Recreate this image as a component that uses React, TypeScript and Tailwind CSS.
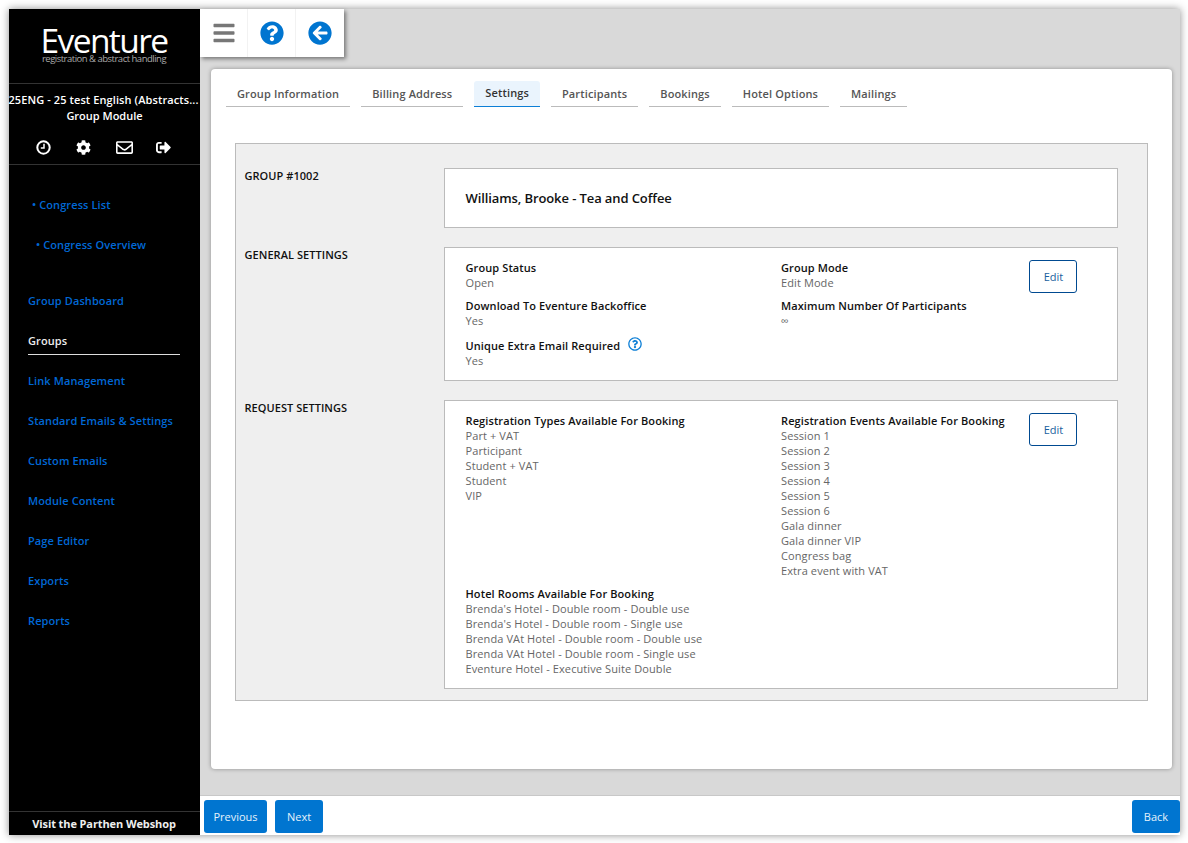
import { FaBars, FaQuestionCircle, FaArrowCircleLeft, FaCog, FaRegEnvelope, FaSignOutAlt, FaRegQuestionCircle } from "react-icons/fa";

const tabs = ["Group Information", "Billing Address", "Settings", "Participants", "Bookings", "Hotel Options", "Mailings"];
const nav = ["Group Dashboard", "Groups", "Link Management", "Standard Emails & Settings", "Custom Emails", "Module Content", "Page Editor", "Exports", "Reports"];

function Field({ title, values, icon }: { title: string; values: string[]; icon?: boolean }) {
  return (
    <div className="mb-2 last:mb-0">
      <div className="flex items-center text-[11px] leading-[15px] font-semibold text-[#111] whitespace-nowrap tracking-[0.1px]">
        {title}
        {icon && <FaRegQuestionCircle className="-mt-[3px] ml-2 text-[14px] text-[#0d7fd6]" />}
      </div>
      {values.map((v, i) => (
        <div key={i} className="text-[11px] leading-[15px] tracking-[0.1px] text-[#666] whitespace-nowrap">{v}</div>
      ))}
    </div>
  );
}

function EditButton() {
  return (
    <button className="w-[48px] h-[33px] rounded-[3px] border border-[#004a91] bg-white pt-[1px] pl-[1px] text-[11px] text-[#1a5f9e]">Edit</button>
  );
}

function Section({ label, children }: { label: string; children: React.ReactNode }) {
  return (
    <div className="flex">
      <div className="w-[199px] -ml-[0.5px] mr-[0.5px] text-[11px] leading-[15px] font-semibold tracking-[0.05px] text-[#111] whitespace-nowrap">{label}</div>
      <div className="w-[674px] border border-[#bbbbbb] bg-white">{children}</div>
    </div>
  );
}

export default function App() {
  return (
    <div className="w-[1188px] h-[843px] bg-white p-[9px] pr-[8px] overflow-hidden font-['Open_Sans',sans-serif]">
      <div className="flex h-[826px] w-[1171px] shadow-[0_0_8px_rgba(0,0,0,0.45)]">
        <aside className="flex w-[191px] shrink-0 flex-col bg-black text-white">
          <div className="flex h-[75px] flex-col items-center border-b border-[#333] pt-[18px] pr-[1px]">
            <div className="text-[33.5px] leading-[26px] font-medium tracking-[-1.6px] text-white">Eventure</div>
            <div className="text-[9.5px] leading-[11px] tracking-[-0.5px] text-[#aaa]">registration &amp; abstract handling</div>
          </div>
          <div className="flex h-[81px] flex-col border-b border-[#333] pt-[8px]">
            <div className="-ml-[2px] overflow-hidden text-center text-[11px] leading-[16px] font-semibold tracking-[0.1px] whitespace-nowrap">25ENG - 25 test English (Abstracts...</div>
            <div className="text-center text-[11px] leading-[16px] font-semibold">Group Module</div>
            <div className="mt-[15px] flex items-center pl-[27px] text-[14px]">
              <svg width="15" height="15" viewBox="0 0 15 15" fill="none" stroke="white" className="mr-[25px]">
                <circle cx="7.5" cy="7.5" r="6.2" strokeWidth="2" />
                <path d="M8 3.8V8H4.8" strokeWidth="1.5" />
              </svg>
              <FaCog className="mr-[25px] text-[15px]" />
              <FaRegEnvelope className="mr-[23px] text-[17px]" />
              <FaSignOutAlt className="text-[15px]" />
            </div>
          </div>
          <nav className="flex flex-1 flex-col text-[11px] font-semibold tracking-[0.1px] text-[#0068d6]">
            <div className="mt-[32px] h-[15px] pl-[23px] leading-[15px]">• Congress List</div>
            <div className="mt-[25px] h-[15px] pl-[27px] leading-[15px]">• Congress Overview</div>
            <div className="mt-[29px] flex flex-col">
              {nav.map((n) => (
                <div key={n} className="h-[40px] pr-[20px] pl-[19px] pt-[12px]">
                  <div className={n === "Groups" ? "border-b border-[#ddd] pb-[6px] leading-[15px] text-[#eee]" : "leading-[15px]"}>{n}</div>
                </div>
              ))}
            </div>
          </nav>
          <div className="flex h-[24px] items-center justify-center border-t border-[#333] pt-[2px] pr-[1px] text-[11px] font-bold tracking-[-0.1px] text-[#eee]">Visit the Parthen Webshop</div>
        </aside>
        <main className="flex flex-1 flex-col bg-[#d9d9d9]">
          <div className="flex h-[48px] w-[144px] shrink-0 bg-white shadow-[2px_2px_4px_rgba(0,0,0,0.45)]">
            <div className="flex w-[48px] items-center justify-center border-r border-[#f2f2f2]"><FaBars className="text-[24px] text-[#777]" /></div>
            <div className="flex w-[48px] items-center justify-center border-r border-[#f2f2f2]"><FaQuestionCircle className="text-[24px] text-[#0075d0]" /></div>
            <div className="flex w-[48px] items-center justify-center"><FaArrowCircleLeft className="text-[24px] text-[#0075d0]" /></div>
          </div>
          <div className="flex-1 pt-[12px] pr-[8px] pl-[11px]">
            <div className="h-[700px] rounded-[4px] bg-white pt-[12px] pl-[15px] shadow-[0_0_4px_rgba(0,0,0,0.35)]">
              <div className="flex gap-[11px]">
                {tabs.map((t) => (
                  <div key={t} className={t === "Settings"
                    ? "h-[26px] rounded-t-[3px] border-b border-[#0d7fd6] bg-[#eaf4fd] px-[11px] text-[11px] leading-[24px] font-semibold tracking-[0.13px] text-[#333]"
                    : "h-[26px] border-b border-[#bbb] px-[11px] pt-[1px] text-[11px] leading-[24px] font-semibold tracking-[0.13px] text-[#555]"}>{t}</div>
                ))}
              </div>
              <div className="mt-[36px] ml-[9px] flex h-[558px] w-[913px] flex-col gap-[19px] border border-[#bbb] bg-[#efefef] pt-[24px] pl-[9px]">
                <Section label="GROUP #1002">
                  <div className="flex h-[58px] items-center pt-[2px] pl-[20.5px] text-[13px] font-semibold tracking-[-0.1px] text-[#111]">Williams, Brooke - Tea and Coffee</div>
                </Section>
                <Section label="GENERAL SETTINGS">
                  <div className="grid grid-cols-[315.5px_248px_48px] py-[12px] pl-[20.5px]">
                    <div>
                      <Field title="Group Status" values={["Open"]} />
                      <Field title="Download To Eventure Backoffice" values={["Yes"]} />
                      <div className="pt-[2px]">
                        <Field title="Unique Extra Email Required" values={["Yes"]} icon />
                      </div>
                    </div>
                    <div>
                      <Field title="Group Mode" values={["Edit Mode"]} />
                      <Field title="Maximum Number Of Participants" values={["∞"]} />
                    </div>
                    <EditButton />
                  </div>
                </Section>
                <Section label="REQUEST SETTINGS">
                  <div className="py-[12px] pl-[20.5px]">
                    <div className="grid grid-cols-[315.5px_248px_48px]">
                      <Field title="Registration Types Available For Booking" values={["Part + VAT", "Participant", "Student + VAT", "Student", "VIP"]} />
                      <Field title="Registration Events Available For Booking" values={["Session 1", "Session 2", "Session 3", "Session 4", "Session 5", "Session 6", "Gala dinner", "Gala dinner VIP", "Congress bag", "Extra event with VAT"]} />
                      <EditButton />
                    </div>
                    <Field title="Hotel Rooms Available For Booking" values={["Brenda's Hotel - Double room - Double use", "Brenda's Hotel - Double room - Single use", "Brenda VAt Hotel - Double room - Double use", "Brenda VAt Hotel - Double room - Single use", "Eventure Hotel - Executive Suite Double"]} />
                  </div>
                </Section>
              </div>
            </div>
          </div>
          <footer className="flex h-[40px] shrink-0 items-start gap-[8px] border-t border-[#c8c8c8] bg-white pt-[4px] pl-[4px]">
            <button className="h-[33px] w-[63px] rounded-[3px] bg-[#0075d0] pt-[1px] text-[11px] text-[#e6f2fb]">Previous</button>
            <button className="h-[33px] w-[48px] rounded-[3px] bg-[#0075d0] pt-[1px] text-[11px] text-[#e6f2fb]">Next</button>
            <button className="ml-auto h-[33px] w-[48px] rounded-[3px] bg-[#0075d0] pt-[1px] text-[11px] text-[#e6f2fb]">Back</button>
          </footer>
        </main>
      </div>
    </div>
  );
}
